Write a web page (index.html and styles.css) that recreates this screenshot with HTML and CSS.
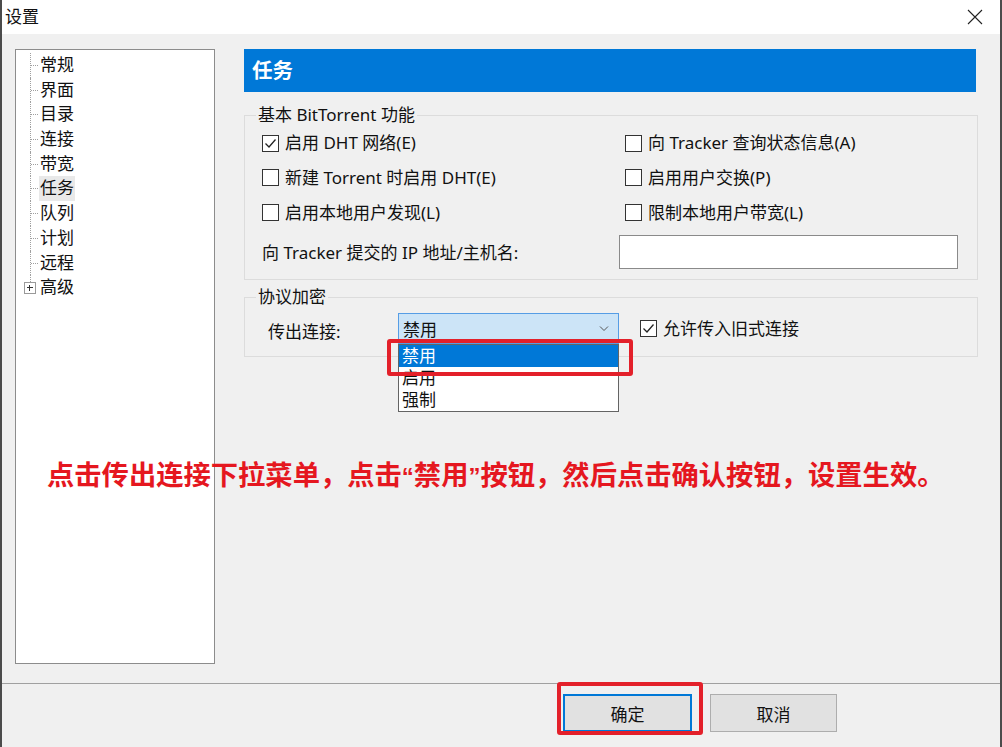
FILE: index.html
```html
<!DOCTYPE html>
<html lang="zh-CN">
<head>
    <meta charset="UTF-8">
    <title>设置</title>
    <link rel="stylesheet" href="styles.css">
</head>
<body>
    <div class="window">
        <header class="titlebar">
            <span class="title">设置</span>
            <svg class="close" width="16" height="16" viewBox="0 0 16 16"><path d="M1 1L15 15M15 1L1 15" stroke="#222" stroke-width="1.1" fill="none"/></svg>
        </header>

        <div class="content">
            <!-- Category tree -->
            <ul class="tree">
                <li>常规</li>
                <li>界面</li>
                <li>目录</li>
                <li>连接</li>
                <li>带宽</li>
                <li class="selected"><span>任务</span></li>
                <li>队列</li>
                <li>计划</li>
                <li>远程</li>
                <li class="collapsed"><span class="expander"></span>高级</li>
            </ul>

            <section class="page">
                <h1 class="page-title">任务</h1>

                <fieldset class="group">
                    <legend>基本 BitTorrent 功能</legend>
                    <div class="options">
                        <label class="check"><span class="box"><svg width="15" height="15" viewBox="0 0 15 15"><path d="M2.5 7.5L6 11L12.5 3.5" stroke="#222" stroke-width="1.3" fill="none"/></svg></span>启用 DHT 网络(E)</label>
                        <label class="check"><span class="box"></span>向 Tracker 查询状态信息(A)</label>
                        <label class="check"><span class="box"></span>新建 Torrent 时启用 DHT(E)</label>
                        <label class="check"><span class="box"></span>启用用户交换(P)</label>
                        <label class="check"><span class="box"></span>启用本地用户发现(L)</label>
                        <label class="check"><span class="box"></span>限制本地用户带宽(L)</label>
                        <span class="field-label">向 Tracker 提交的 IP 地址/主机名:</span>
                        <input class="text-input" type="text">
                    </div>
                </fieldset>

                <fieldset class="group">
                    <legend>协议加密</legend>
                    <div class="enc-row">
                        <span class="enc-label">传出连接:</span>
                        <div class="combo">
                            <div class="combo-value">
                                <span>禁用</span>
                                <svg width="10" height="6" viewBox="0 0 10 6"><path d="M1 0.5L5 4.5L9 0.5" stroke="#555" stroke-width="1" fill="none"/></svg>
                            </div>
                            <ul class="combo-list">
                                <li class="active">禁用</li>
                                <li>启用</li>
                                <li>强制</li>
                            </ul>
                            <span class="mark mark-item"></span>
                        </div>
                        <label class="check legacy"><span class="box"><svg width="15" height="15" viewBox="0 0 15 15"><path d="M2.5 7.5L6 11L12.5 3.5" stroke="#222" stroke-width="1.3" fill="none"/></svg></span>允许传入旧式连接</label>
                    </div>
                </fieldset>
            </section>
        </div>

        <footer class="buttons">
            <div class="btn-wrap">
                <button class="btn default">确定</button>
                <span class="mark mark-ok"></span>
            </div>
            <button class="btn">取消</button>
        </footer>

        <p class="note">点击传出连接下拉菜单，点击<span class="q">“</span>禁用<span class="q">”</span>按钮，然后点击确认按钮，设置生效。</p>
    </div>
</body>
</html>
```

FILE: styles.css
```css
body {
    margin: 0;
    font-family: "Noto Sans", "Noto Sans CJK SC", sans-serif;
    font-size: 17px;
    color: #111;
    background: #f0f0f0;
}
.window {
    position: relative;
    width: 1002px;
    height: 747px;
    box-sizing: border-box;
    border-left: 2px solid #4b4b4b;
    border-right: 2px solid #4b4b4b;
    background: #f0f0f0;
    display: flex;
    flex-direction: column;
    overflow: hidden;
}
.titlebar {
    height: 34px;
    flex: none;
    background: #fff;
    display: flex;
    align-items: center;
    justify-content: space-between;
    padding: 0 17px 0 3px;
}
.title {
    font-size: 17px;
    line-height: 34px;
}
.close {
    display: block;
    margin-top: -1px;
}

/* main area: tree on the left, settings page on the right */
.content {
    flex: none;
    height: 649px;
    box-sizing: border-box;
    display: flex;
    padding: 15px 22px 19px 13px;
}
.tree {
    list-style: none;
    margin: 0;
    padding: 3px 0 0;
    width: 200px;
    box-sizing: border-box;
    background: #fff;
    border: 1px solid #8c8c8c;
}
.tree li {
    position: relative;
    margin-left: 14px;
    padding-left: 9px;
    height: 24.7px;
    line-height: 24.7px;
    border-left: 1px dotted #a0a0a0;
}
.tree li::before {
    content: "";
    position: absolute;
    left: 0;
    top: 12px;
    width: 7px;
    border-top: 1px dotted #a0a0a0;
}
.tree li.selected span {
    display: inline-block;
    background: #e9e9e9;
    padding: 0 1px;
    margin-left: -1px;
}
.tree li.collapsed {
    border-left: none;
    padding-left: 10px;
}
.tree li.collapsed::before {
    display: none;
}
.tree li.collapsed::after {
    content: "";
    position: absolute;
    left: 0;
    top: 0;
    height: 7px;
    border-left: 1px dotted #a0a0a0;
}
.expander {
    position: absolute;
    left: -6px;
    top: 7px;
    width: 10px;
    height: 10px;
    border: 1px solid #9a9a9a;
    background: #fff;
    z-index: 1;
}
.expander::before,
.expander::after {
    content: "";
    position: absolute;
    background: #333;
}
.expander::before {
    left: 2px;
    top: 4px;
    width: 6px;
    height: 1px;
}
.expander::after {
    left: 4px;
    top: 2px;
    width: 1px;
    height: 6px;
}

.page {
    flex: 1;
    margin-left: 29px;
}
.page-title {
    margin: 0 2px 0 0;
    height: 43px;
    line-height: 43px;
    padding-left: 8px;
    background: #0078d7;
    color: #fff;
    font-size: 20.5px;
    font-weight: 700;
}

.group {
    margin: 12px 0 0;
    padding: 0 0 10px 17px;
    border: 1px solid #dcdcdc;
    min-width: 0;
}
.group + .group {
    margin-top: 6px;
    padding: 5px 0 12px 23px;
}
.group legend {
    padding: 0 2px;
    margin-left: -6px;
    line-height: 22px;
}
.group + .group legend {
    margin-left: -12px;
}

.options {
    display: grid;
    grid-template-columns: 363px 1fr;
    grid-template-rows: 34px 35px 35px 39px;
    align-items: center;
}
.options .text-input {
    align-self: end;
    margin-left: -6px;
    width: 339px;
    height: 34px;
    box-sizing: border-box;
    border: 1px solid #8a8a8a;
    background: #fff;
}
.options .field-label {
    margin-top: 3px;
}

.check {
    display: flex;
    align-items: center;
    line-height: 22px;
}
.box {
    width: 17px;
    height: 17px;
    box-sizing: border-box;
    border: 1px solid #333;
    background: #fff;
    margin-right: 6px;
    display: flex;
    align-items: center;
    justify-content: center;
}

.enc-row {
    display: flex;
    align-items: center;
}
.enc-label {
    width: 130px;
    margin-top: 3px;
}
.combo {
    position: relative;
    width: 221px;
}
.combo-value {
    height: 31px;
    box-sizing: border-box;
    border: 1px solid #569de5;
    background: #cce4f7;
    display: flex;
    align-items: center;
    justify-content: space-between;
    padding: 0 9px 0 4px;
}
.combo-list {
    position: absolute;
    left: 0;
    top: 31px;
    width: 221px;
    box-sizing: border-box;
    margin: 0;
    padding: 0;
    list-style: none;
    background: #fff;
    border: 1px solid #646464;
    z-index: 2;
}
.combo-list li {
    height: 22px;
    line-height: 22px;
    padding-left: 3px;
}
.combo-list li.active {
    background: #0078d7;
    color: #fff;
}
.legacy {
    margin-left: 21px;
}

/* red annotation frames */
.mark {
    position: absolute;
    border: 4px solid #e3202a;
    border-radius: 3px;
    box-sizing: border-box;
    z-index: 3;
}
.mark-item {
    left: -11px;
    top: 26px;
    width: 246px;
    height: 37px;
}
.mark-ok {
    left: -6px;
    top: -12px;
    width: 146px;
    height: 53px;
}

.buttons {
    flex: 1;
    border-top: 1px solid #a0a0a0;
    display: flex;
    align-items: flex-start;
    padding: 10px 0 0 561px;
}
.btn-wrap {
    position: relative;
}
.btn {
    font: inherit;
    color: #111;
    width: 127px;
    height: 38px;
    background: #e1e1e1;
    border: 1px solid #adadad;
    padding: 0;
    margin-left: 18px;
}
.btn.default {
    width: 129px;
    margin-left: 0;
    border: 1px solid #0078d7;
    box-shadow: inset 0 0 0 1px #0078d7;
}

.note {
    position: absolute;
    left: 45px;
    top: 454px;
    margin: 0;
    line-height: 38px;
    font-family: "Noto Sans CJK SC", sans-serif;
    font-size: 27.3px;
    font-weight: 700;
    color: #e5171f;
    white-space: nowrap;
    z-index: 4;
}
.note .q {
    font-family: "Liberation Sans", sans-serif;
    font-size: 24px;
}
```
